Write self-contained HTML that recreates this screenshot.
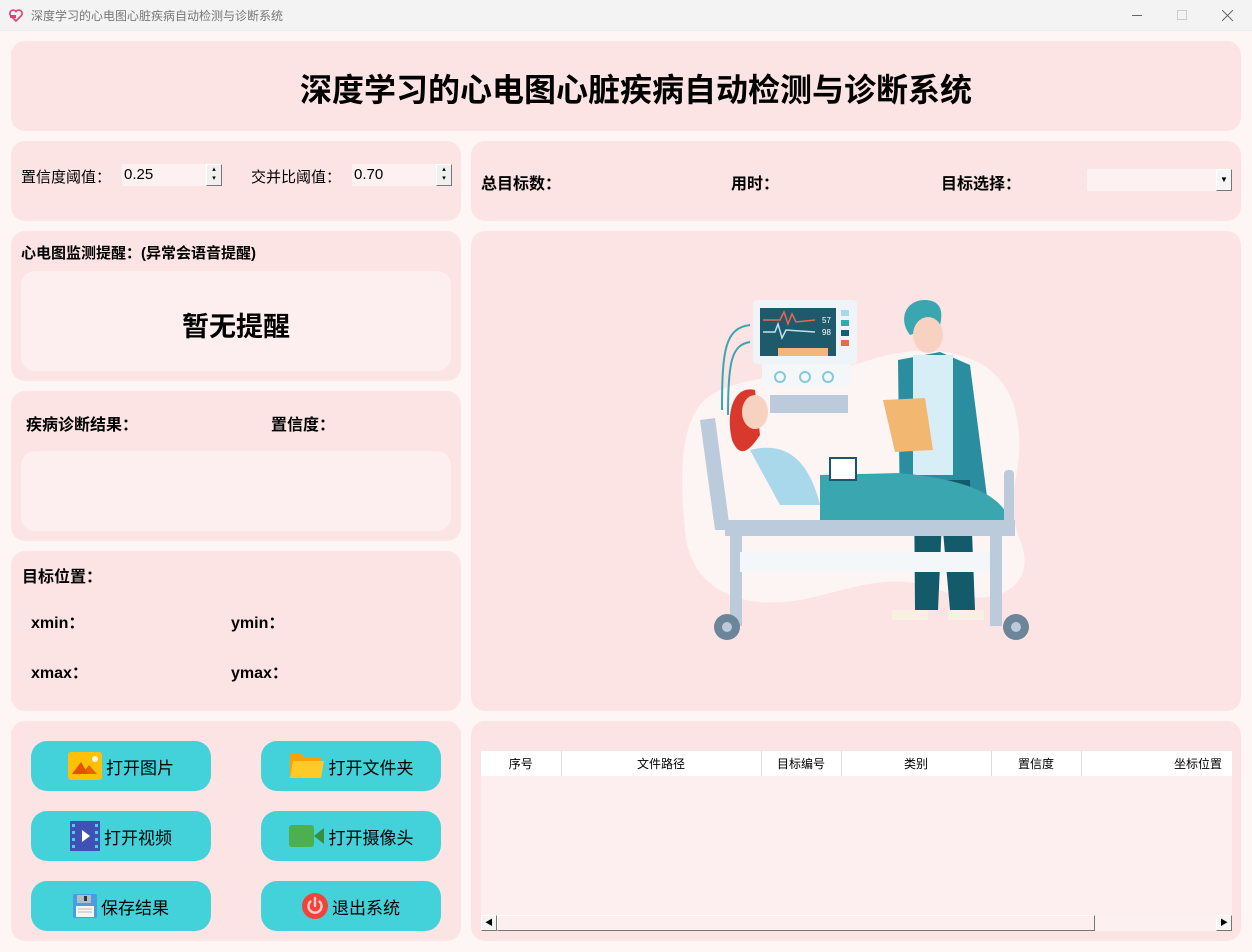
<!DOCTYPE html>
<html><head><meta charset="utf-8"><style>
*{margin:0;padding:0;box-sizing:border-box}
body{width:1252px;height:952px;background:#fdf6f5;font-family:"Liberation Sans","Noto Sans CJK SC",sans-serif;position:relative;overflow:hidden;color:#000}
.a{position:absolute}
.p{position:absolute;background:#fde4e4;border-radius:14px}
.in{position:absolute;background:#fdefef;border-radius:14px}
.b{font-weight:bold}
.btn{position:absolute;width:180px;height:50px;background:#43d1da;border-radius:16px;display:flex;align-items:center;justify-content:center;font-size:17px;gap:4px}
.spin{position:absolute;width:100px;height:22px;background:#fdf1f1;font-size:15px;padding:2px 0 0 2px}
.sb{position:absolute;right:0;top:0;width:16px;height:22px;border:1px solid #777;border-top-color:#fff;border-left-color:#fff;background:#f0f0f0;font-size:7px;line-height:9px;text-align:center}
th{font-weight:normal;font-size:12px;height:25px;border-right:1px solid #ddd;background:#fff}
</style></head><body>
<div class="a" style="left:0;top:0;width:1252px;height:31px;background:#f3f3f3;border-bottom:1px solid #eee"></div>
<svg class="a" style="left:9px;top:9px" width="14" height="13" viewBox="0 0 14 13"><path d="M7 12 L1.5 6.5 A3 3 0 0 1 7 2.5 A3 3 0 0 1 12.5 6.5 Z" fill="none" stroke="#e0407a" stroke-width="1.6"/><rect x="1" y="6" width="6" height="3" fill="#e0407a"/></svg>
<div class="a" style="left:31px;top:7px;font-size:12px;color:#777">深度学习的心电图心脏疾病自动检测与诊断系统</div>
<div class="a" style="left:1132px;top:15px;width:10px;height:1px;background:#666"></div>
<div class="a" style="left:1177px;top:10px;width:10px;height:10px;border:1px solid #ccc"></div>
<svg class="a" style="left:1222px;top:10px" width="11" height="11"><path d="M0 0L11 11M11 0L0 11" stroke="#666" stroke-width="1"/></svg>

<div class="p" style="left:11px;top:41px;width:1230px;height:90px"></div>
<div class="a b" style="left:0;width:1272px;top:70px;text-align:center;font-size:32px;line-height:40px">深度学习的心电图心脏疾病自动检测与诊断系统</div>

<div class="p" style="left:11px;top:141px;width:450px;height:80px"></div>
<div class="a" style="left:21px;top:166px;font-size:15px">置信度阈值：</div>
<div class="spin" style="left:122px;top:164px">0.25<div class="sb">▴<br>▾</div></div>
<div class="a" style="left:251px;top:166px;font-size:15px">交并比阈值：</div>
<div class="spin" style="left:352px;top:164px">0.70<div class="sb">▴<br>▾</div></div>

<div class="p" style="left:471px;top:141px;width:770px;height:80px"></div>
<div class="a b" style="left:481px;top:170px;font-size:16px">总目标数：</div>
<div class="a b" style="left:731px;top:170px;font-size:16px">用时：</div>
<div class="a b" style="left:941px;top:170px;font-size:16px">目标选择：</div>
<div class="a" style="left:1087px;top:169px;width:145px;height:22px;background:#fdf1f1"><div class="a" style="right:0;top:0;width:16px;height:22px;border:1px solid #777;border-top-color:#fff;border-left-color:#fff;background:#f5f5f5;font-size:8px;text-align:center;line-height:20px">▼</div></div>

<div class="p" style="left:11px;top:231px;width:450px;height:150px"></div>
<div class="a b" style="left:21px;top:242px;font-size:15px">心电图监测提醒：(异常会语音提醒)</div>
<div class="in" style="left:21px;top:271px;width:430px;height:100px"></div>
<div class="a b" style="left:21px;width:430px;top:305px;text-align:center;font-size:27px">暂无提醒</div>

<div class="p" style="left:11px;top:391px;width:450px;height:150px"></div>
<div class="a b" style="left:26px;top:411px;font-size:16px">疾病诊断结果：</div>
<div class="a b" style="left:271px;top:411px;font-size:16px">置信度：</div>
<div class="in" style="left:21px;top:451px;width:430px;height:80px"></div>

<div class="p" style="left:11px;top:551px;width:450px;height:160px"></div>
<div class="a b" style="left:22px;top:563px;font-size:16px">目标位置：</div>
<div class="a b" style="left:31px;top:609px;font-size:16px">xmin：</div>
<div class="a b" style="left:231px;top:609px;font-size:16px">ymin：</div>
<div class="a b" style="left:31px;top:659px;font-size:16px">xmax：</div>
<div class="a b" style="left:231px;top:659px;font-size:16px">ymax：</div>

<div class="p" style="left:471px;top:231px;width:770px;height:480px"></div>
<svg class="a" style="left:670px;top:290px" width="380" height="360" viewBox="0 0 380 360">
<path d="M30 115 C60 80 140 90 200 70 C260 50 330 60 345 120 C360 180 330 200 350 250 C370 300 320 320 270 300 C220 280 180 300 130 310 C70 320 20 300 15 240 C10 190 10 140 30 115Z" fill="#fdf5f4"/>
<rect x="83" y="10" width="104" height="64" rx="4" fill="#eef4f8"/>
<rect x="90" y="18" width="76" height="48" fill="#1d5a6b"/>
<path d="M93 30 L110 30 L114 22 L118 34 L122 24 L126 32 L145 30" stroke="#e8674f" fill="none" stroke-width="1.5"/>
<path d="M93 42 L105 42 L108 34 L112 48 L116 40 L145 42" stroke="#bfe3ee" fill="none" stroke-width="1.5"/>
<text x="152" y="33" font-size="8" fill="#fff" font-family="Liberation Sans">57</text>
<text x="152" y="45" font-size="8" fill="#fff" font-family="Liberation Sans">98</text>
<rect x="108" y="58" width="50" height="8" fill="#f2b57a"/>
<rect x="171" y="20" width="8" height="6" fill="#a8d8ea"/><rect x="171" y="30" width="8" height="6" fill="#3aa6b0"/><rect x="171" y="40" width="8" height="6" fill="#126070"/><rect x="171" y="50" width="8" height="6" fill="#e8674f"/>
<rect x="92" y="74" width="88" height="22" fill="#f4f7fa"/>
<circle cx="110" cy="87" r="5" fill="none" stroke="#88c9d9" stroke-width="2"/><circle cx="135" cy="87" r="5" fill="none" stroke="#88c9d9" stroke-width="2"/><circle cx="158" cy="87" r="5" fill="none" stroke="#88c9d9" stroke-width="2"/>
<rect x="100" y="105" width="78" height="18" fill="#bccbdb"/>
<path d="M80 35 C55 38 52 60 52 120" stroke="#3aa6b0" fill="none" stroke-width="2"/>
<path d="M80 52 C62 55 58 70 58 125" stroke="#3aa6b0" fill="none" stroke-width="2"/>
<path d="M255 10 C235 10 228 30 240 45 L270 35 C275 15 265 10 255 10Z" fill="#3aa6b0"/>
<ellipse cx="258" cy="45" rx="15" ry="18" fill="#f8d2c0"/>
<path d="M228 70 L270 62 L300 75 L320 230 L230 230 Z" fill="#2a8ea0"/>
<rect x="243" y="65" width="40" height="120" fill="#d8eef6"/>
<path d="M244 190 L300 190 L305 320 L280 320 L272 230 L268 320 L245 320 Z" fill="#135a6b"/>
<rect x="222" y="320" width="36" height="10" fill="#f8f0e0"/><rect x="278" y="320" width="36" height="10" fill="#f8f0e0"/>
<path d="M213 110 L255 108 L263 160 L225 162 Z" fill="#f2b770"/>
<path d="M85 100 C65 95 55 120 62 150 C70 170 80 160 90 145 Z" fill="#d9392c"/>
<ellipse cx="85" cy="122" rx="13" ry="17" fill="#f8d2c0"/>
<path d="M80 160 C120 150 140 175 150 215 L110 215 Z" fill="#a8d8ea"/>
<path d="M150 185 L230 183 C300 190 330 205 340 230 L150 230 Z" fill="#3aa6b0"/>
<rect x="160" y="168" width="26" height="22" fill="#fff" stroke="#135a6b" stroke-width="2"/>
<path d="M30 130 L45 128 L60 240 L45 240 Z" fill="#bccbdb"/>
<rect x="55" y="230" width="290" height="16" fill="#bccbdb"/>
<rect x="60" y="246" width="12" height="90" fill="#bccbdb"/>
<rect x="320" y="246" width="12" height="90" fill="#bccbdb"/>
<rect x="334" y="180" width="10" height="65" rx="4" fill="#bccbdb"/>
<rect x="70" y="262" width="250" height="20" fill="#f4f7fa"/>
<circle cx="57" cy="337" r="13" fill="#6c8598"/><circle cx="57" cy="337" r="5" fill="#bccbdb"/>
<circle cx="346" cy="337" r="13" fill="#6c8598"/><circle cx="346" cy="337" r="5" fill="#bccbdb"/>
</svg>

<div class="p" style="left:11px;top:721px;width:450px;height:220px"></div>
<div class="btn" style="left:31px;top:741px"><svg width="34" height="28" viewBox="0 0 34 28"><rect width="34" height="28" rx="3" fill="#ffc107"/><path d="M4 22 L13 10 L20 22 Z" fill="#e65100"/><path d="M14 22 L21 13 L29 22 Z" fill="#e65100" opacity=".85"/><circle cx="27" cy="7" r="3" fill="#fff8e1"/></svg>打开图片</div>
<div class="btn" style="left:261px;top:741px"><svg width="36" height="28" viewBox="0 0 36 28"><path d="M1 2 H12 L15 5 H32 V26 H1Z" fill="#ffa000"/><path d="M4 9 H35 L32 26 H1 Z" fill="#ffca28"/></svg>打开文件夹</div>
<div class="btn" style="left:31px;top:811px"><svg width="30" height="30" viewBox="0 0 30 30"><rect width="30" height="30" fill="#3f51b5"/><g fill="#4dd0e1"><rect x="2" y="3" width="3" height="3"/><rect x="2" y="10" width="3" height="3"/><rect x="2" y="17" width="3" height="3"/><rect x="2" y="24" width="3" height="3"/><rect x="25" y="3" width="3" height="3"/><rect x="25" y="10" width="3" height="3"/><rect x="25" y="17" width="3" height="3"/><rect x="25" y="24" width="3" height="3"/></g><path d="M12 9 L20 15 L12 21Z" fill="#fff"/></svg>打开视频</div>
<div class="btn" style="left:261px;top:811px"><svg width="36" height="22" viewBox="0 0 36 22"><rect width="25" height="22" rx="3" fill="#4caf50"/><path d="M25 11 L35 3 V19Z" fill="#388e3c"/></svg>打开摄像头</div>
<div class="btn" style="left:31px;top:881px"><svg width="24" height="24" viewBox="0 0 24 24"><rect width="24" height="24" rx="2" fill="#4a9ee0"/><rect x="4" y="1" width="14" height="8" fill="#b0bec5"/><rect x="11" y="2" width="3" height="5" fill="#333"/><rect x="3" y="12" width="18" height="11" fill="#f5f5f5"/><g stroke="#bbb"><line x1="5" y1="15" x2="19" y2="15"/><line x1="5" y1="18" x2="19" y2="18"/></g></svg>保存结果</div>
<div class="btn" style="left:261px;top:881px"><svg width="26" height="26" viewBox="0 0 26 26"><circle cx="13" cy="13" r="13" fill="#f44336"/><path d="M8.5 8.5 A6.5 6.5 0 1 0 17.5 8.5" fill="none" stroke="#ffcdd2" stroke-width="2.4" stroke-linecap="round"/><line x1="13" y1="5" x2="13" y2="13" stroke="#ffcdd2" stroke-width="2.4" stroke-linecap="round"/></svg>退出系统</div>

<div class="p" style="left:471px;top:721px;width:770px;height:220px"></div>
<div class="a" style="left:481px;top:751px;width:751px;height:180px;background:#fdefef;overflow:hidden">
<table style="border-collapse:collapse;width:751px"><tr><th style="width:80px">序号</th><th style="width:200px">文件路径</th><th style="width:80px">目标编号</th><th style="width:150px">类别</th><th style="width:90px">置信度</th><th style="text-align:right;padding-right:10px;border:none">坐标位置</th></tr></table>
<div class="a" style="left:0;top:164px;width:751px;height:16px;background:#fdf0f0">
<div class="a" style="left:0;top:0;width:16px;height:16px;border:1px solid #777;border-top-color:#fff;border-left-color:#fff;background:#f4f4f4;font-size:8px;text-align:center;line-height:14px">◀</div>
<div class="a" style="left:16px;top:0;width:598px;height:16px;border:1px solid #777;border-top-color:#fff;border-left-color:#fff;background:#fdefef"></div>
<div class="a" style="right:0;top:0;width:16px;height:16px;border:1px solid #777;border-top-color:#fff;border-left-color:#fff;background:#f4f4f4;font-size:8px;text-align:center;line-height:14px">▶</div>
</div></div>
</body></html>
